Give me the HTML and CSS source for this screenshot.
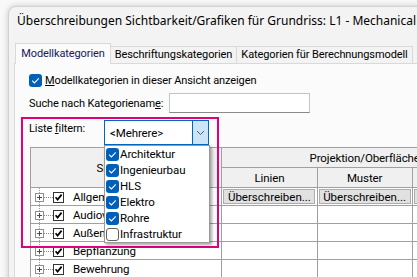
FILE: index.html
```html
<!DOCTYPE html>
<html lang="de">
<head>
    <meta charset="UTF-8">
    <meta name="viewport" content="width=device-width, initial-scale=1.0">
    <title>Sichtbarkeit/Grafiken</title>
    <link rel="stylesheet" href="styles.css">
</head>
<body>
    <div class="window">
        <div class="window-title">Überschreibungen Sichtbarkeit/Grafiken für Grundriss: L1 - Mechanical</div>

        <div class="tabs">
            <div class="tab active">Modellkategorien</div>
            <div class="tab">Beschriftungskategorien</div>
            <div class="tab">Kategorien für Berechnungsmodell</div>
        </div>

        <div class="panel">
            <div class="show-row">
                <span class="win-check checked">
                    <svg width="13" height="13" viewBox="0 0 13 13"><rect x="0" y="0" width="13" height="13" rx="3" fill="#005fb8"/><path d="M3.2 6.7 L5.4 8.9 L9.8 4.3" fill="none" stroke="#fff" stroke-width="1.1"/></svg>
                </span>
                <span><u>M</u>odellkategorien in dieser Ansicht anzeigen</span>
            </div>

            <div class="search-row">
                <span class="field-label search-label">Suche nach Kategorienam<u>e</u>:</span>
                <div class="text-input"></div>
            </div>

            <div class="filter-row">
                <span class="field-label filter-label">Liste <u>f</u>iltern:</span>
                <div class="combo">
                    <span class="combo-value">&lt;Mehrere&gt;</span>
                    <span class="combo-button">
                        <svg width="9" height="6" viewBox="0 0 9 6"><path d="M1 1 L4.5 4.5 L8 1" fill="none" stroke="#5a5a5a" stroke-width="1"/></svg>
                    </span>
                    <ul class="combo-list">
                        <li><span class="win-check checked"><svg width="13" height="13" viewBox="0 0 13 13"><rect width="13" height="13" rx="3" fill="#005fb8"/><path d="M3.2 6.7 L5.4 8.9 L9.8 4.3" fill="none" stroke="#fff" stroke-width="1.1"/></svg></span>Architektur</li>
                        <li><span class="win-check checked"><svg width="13" height="13" viewBox="0 0 13 13"><rect width="13" height="13" rx="3" fill="#005fb8"/><path d="M3.2 6.7 L5.4 8.9 L9.8 4.3" fill="none" stroke="#fff" stroke-width="1.1"/></svg></span>Ingenieurbau</li>
                        <li><span class="win-check checked"><svg width="13" height="13" viewBox="0 0 13 13"><rect width="13" height="13" rx="3" fill="#005fb8"/><path d="M3.2 6.7 L5.4 8.9 L9.8 4.3" fill="none" stroke="#fff" stroke-width="1.1"/></svg></span>HLS</li>
                        <li><span class="win-check checked"><svg width="13" height="13" viewBox="0 0 13 13"><rect width="13" height="13" rx="3" fill="#005fb8"/><path d="M3.2 6.7 L5.4 8.9 L9.8 4.3" fill="none" stroke="#fff" stroke-width="1.1"/></svg></span>Elektro</li>
                        <li><span class="win-check checked"><svg width="13" height="13" viewBox="0 0 13 13"><rect width="13" height="13" rx="3" fill="#005fb8"/><path d="M3.2 6.7 L5.4 8.9 L9.8 4.3" fill="none" stroke="#fff" stroke-width="1.1"/></svg></span>Rohre</li>
                        <li><span class="win-check"><svg width="13" height="13" viewBox="0 0 13 13"><rect x="0.5" y="0.5" width="12" height="12" rx="2.5" fill="#fff" stroke="#616161"/></svg></span>Infrastruktur</li>
                    </ul>
                </div>
            </div>

            <table class="cat-table">
                <colgroup>
                    <col class="col-vis">
                    <col class="col-sub">
                    <col class="col-sub">
                    <col class="col-sub">
                </colgroup>
                <thead>
                    <tr class="head-top">
                        <th rowspan="2">Sichtbarkeit</th>
                        <th colspan="3">Projektion/Oberfläche</th>
                    </tr>
                    <tr class="head-sub">
                        <th>Linien</th>
                        <th>Muster</th>
                        <th>Transparenz</th>
                    </tr>
                </thead>
                <tbody>
                    <tr>
                        <td class="tree-cell"><span class="expander"><svg width="9" height="9" viewBox="0 0 9 9"><rect x="0.5" y="0.5" width="8" height="8" fill="#fff" stroke="#8f8f8f"/><path d="M2 4.5 H7 M4.5 2 V7" stroke="#2b4aa0"/></svg></span><span class="dots"></span><span class="classic-check"><svg width="11" height="11" viewBox="0 0 11 11"><rect x="0.5" y="0.5" width="10" height="10" fill="#fff" stroke="#333"/><path d="M2.6 5.2 L4.6 7.6 L8.6 2.6" fill="none" stroke="#000" stroke-width="1.7"/></svg></span>Allgemeines Modell</td>
                        <td><button type="button" class="override">Überschreiben...</button></td>
                        <td><button type="button" class="override">Überschreiben...</button></td>
                        <td><button type="button" class="override">Überschreiben...</button></td>
                    </tr>
                    <tr>
                        <td class="tree-cell"><span class="expander"><svg width="9" height="9" viewBox="0 0 9 9"><rect x="0.5" y="0.5" width="8" height="8" fill="#fff" stroke="#8f8f8f"/><path d="M2 4.5 H7 M4.5 2 V7" stroke="#2b4aa0"/></svg></span><span class="dots"></span><span class="classic-check"><svg width="11" height="11" viewBox="0 0 11 11"><rect x="0.5" y="0.5" width="10" height="10" fill="#fff" stroke="#333"/><path d="M2.6 5.2 L4.6 7.6 L8.6 2.6" fill="none" stroke="#000" stroke-width="1.7"/></svg></span>Audiovisuelle Geräte</td>
                        <td></td><td></td><td></td>
                    </tr>
                    <tr>
                        <td class="tree-cell"><span class="expander"><svg width="9" height="9" viewBox="0 0 9 9"><rect x="0.5" y="0.5" width="8" height="8" fill="#fff" stroke="#8f8f8f"/><path d="M2 4.5 H7 M4.5 2 V7" stroke="#2b4aa0"/></svg></span><span class="dots"></span><span class="classic-check"><svg width="11" height="11" viewBox="0 0 11 11"><rect x="0.5" y="0.5" width="10" height="10" fill="#fff" stroke="#333"/><path d="M2.6 5.2 L4.6 7.6 L8.6 2.6" fill="none" stroke="#000" stroke-width="1.7"/></svg></span>Außenanlagen</td>
                        <td></td><td></td><td></td>
                    </tr>
                    <tr>
                        <td class="tree-cell"><span class="expander"><svg width="9" height="9" viewBox="0 0 9 9"><rect x="0.5" y="0.5" width="8" height="8" fill="#fff" stroke="#8f8f8f"/><path d="M2 4.5 H7 M4.5 2 V7" stroke="#2b4aa0"/></svg></span><span class="dots"></span><span class="classic-check"><svg width="11" height="11" viewBox="0 0 11 11"><rect x="0.5" y="0.5" width="10" height="10" fill="#fff" stroke="#333"/><path d="M2.6 5.2 L4.6 7.6 L8.6 2.6" fill="none" stroke="#000" stroke-width="1.7"/></svg></span>Bepflanzung</td>
                        <td></td><td></td><td></td>
                    </tr>
                    <tr>
                        <td class="tree-cell"><span class="expander"><svg width="9" height="9" viewBox="0 0 9 9"><rect x="0.5" y="0.5" width="8" height="8" fill="#fff" stroke="#8f8f8f"/><path d="M2 4.5 H7 M4.5 2 V7" stroke="#2b4aa0"/></svg></span><span class="dots"></span><span class="classic-check"><svg width="11" height="11" viewBox="0 0 11 11"><rect x="0.5" y="0.5" width="10" height="10" fill="#fff" stroke="#333"/><path d="M2.6 5.2 L4.6 7.6 L8.6 2.6" fill="none" stroke="#000" stroke-width="1.7"/></svg></span>Bewehrung</td>
                        <td></td><td></td><td></td>
                    </tr>
                </tbody>
            </table>

            <div class="highlight"></div>
        </div>
    </div>
</body>
</html>
```

FILE: styles.css
```css
body {
    margin: 0;
    height: 277px;
    overflow: hidden;
    background-color: #f9f9f9;
    font-family: Roboto, "Noto Sans", sans-serif;
    font-size: 11px;
    letter-spacing: -0.1px;
    color: #000;
}

.window {
    margin: 6px 0 0 8px;
    width: 560px;
    height: 340px;
    background-color: #f3f3f3;
    border: 1px solid #d0d0d0;
    border-radius: 8px 0 0 0;
    box-shadow: 0px 0px 6px rgba(0, 0, 0, 0.2);
}

.window-title {
    box-sizing: border-box;
    height: 36px;
    padding: 6px 0 0 8px;
    line-height: 16px;
    font-family: "Noto Sans", sans-serif;
    font-size: 12px;
    letter-spacing: 0;
}

.tabs {
    display: flex;
    align-items: flex-end;
    height: 20px;
    margin-left: 6px;
}

.tab {
    box-sizing: border-box;
    height: 17px;
    line-height: 15px;
    text-align: center;
    white-space: nowrap;
    background-color: #f3f3f3;
    border: 1px solid #d9d9d9;
    border-bottom: none;
    margin-left: -1px;
}

.tab:nth-child(1) { width: 96px; margin-left: 0; }
.tab:nth-child(2) { width: 127px; }
.tab:nth-child(3) { width: 177px; }

.tab.active {
    height: 21px;
    line-height: 19px;
    margin-bottom: -1px;
    background-color: #fbfbfb;
    color: #14205a;
    position: relative;
    z-index: 1;
}

.panel {
    position: relative;
    margin-left: 5px;
    height: 300px;
    padding: 8px 0 0 14px;
    background-color: #fbfbfb;
    border: 1px solid #d9d9d9;
}

.show-row {
    display: flex;
    align-items: center;
    gap: 3px;
    height: 16px;
}

.win-check {
    display: inline-flex;
    width: 13px;
    height: 13px;
}

.search-row {
    display: flex;
    align-items: center;
    height: 20px;
    margin-top: 5px;
}

.field-label {
    white-space: nowrap;
}

.search-label {
    width: 140px;
}

.text-input {
    box-sizing: border-box;
    width: 141px;
    height: 20px;
    background-color: #fff;
    border: 1px solid #c4c4c4;
    border-bottom-color: #8a8a8a;
}

.filter-row {
    display: flex;
    align-items: flex-start;
    height: 25px;
    margin-top: 7px;
}

.filter-label {
    width: 75px;
    padding-top: 1px;
    line-height: 16px;
}

.combo {
    position: relative;
    box-sizing: border-box;
    display: flex;
    width: 105px;
    height: 25px;
    background-color: #fff;
    border: 1px solid #0067c0;
}

.combo-value {
    flex: 1;
    padding-left: 5px;
    line-height: 24px;
    font-size: 11.5px;
}

.combo-button {
    display: flex;
    align-items: center;
    justify-content: center;
    width: 15px;
    background-color: #cce4f7;
    border-left: 1px solid #0067c0;
}

.combo-list {
    position: absolute;
    top: 24px;
    left: -1px;
    z-index: 2;
    box-sizing: border-box;
    width: 106px;
    margin: 0;
    padding: 0;
    list-style: none;
    background-color: #fff;
    border: 1px solid #9a9a9a;
    box-shadow: 2px 2px 3px rgba(0, 0, 0, 0.35);
    font-size: 11.5px;
}

.combo-list li {
    display: flex;
    align-items: center;
    gap: 1px;
    height: 16px;
    padding-left: 1px;
    white-space: nowrap;
}

.cat-table {
    margin: 2px 0 0 1px;
    border-collapse: collapse;
    table-layout: fixed;
    width: 478px;
    font-size: 11.5px;
}

.col-vis { width: 191px; }
.col-sub { width: 95px; }

.cat-table th,
.cat-table td {
    padding: 0;
    border: 1px solid #a0a0a0;
    white-space: nowrap;
    overflow: hidden;
}

.cat-table th {
    font-weight: normal;
    background-color: #f0f0f0;
}

.head-top { height: 20px; }
.head-sub { height: 20px; }

.cat-table tbody tr {
    height: 18px;
    background-color: #fff;
}

.tree-cell {
    padding-left: 4px !important;
    background: repeating-linear-gradient(to bottom, #9a9a9a 0 1px, transparent 1px 2px) 8px 0 / 1px 100% no-repeat, #fff;
}

.expander,
.classic-check {
    display: inline-flex;
    vertical-align: middle;
}

.dots {
    display: inline-block;
    width: 9px;
    vertical-align: middle;
    border-top: 1px dotted #8a8a8a;
}

.classic-check {
    margin-right: 9px;
}

.override {
    display: block;
    box-sizing: border-box;
    width: 92px;
    height: 15px;
    margin: 1px;
    padding: 0;
    font-family: inherit;
    font-size: 11.5px;
    line-height: 12px;
    background-color: #e1e1e1;
    border: 1px solid #adadad;
    overflow: hidden;
}

.highlight {
    position: absolute;
    left: 6px;
    top: 53px;
    box-sizing: border-box;
    width: 198px;
    height: 131px;
    border: 2px solid #e2007a;
}
```
